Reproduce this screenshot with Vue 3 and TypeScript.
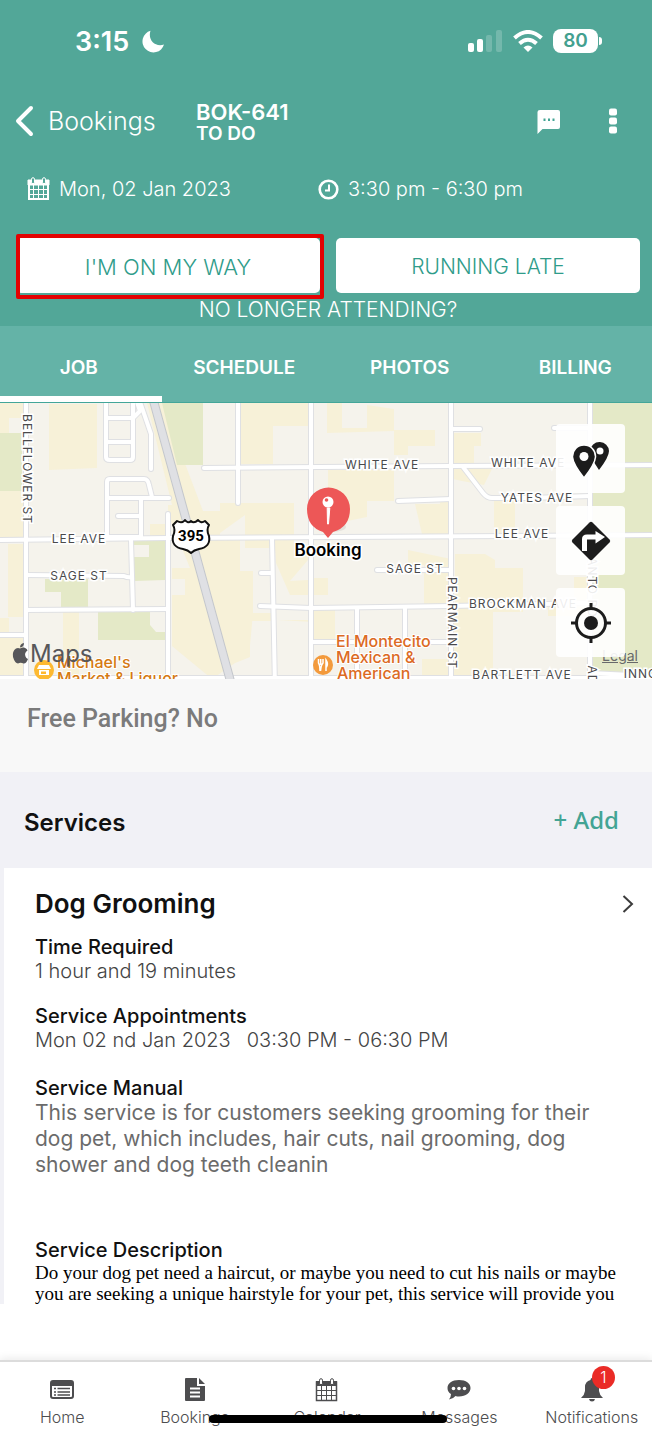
<script setup lang="ts">
import { ref } from 'vue'

interface Label {
  text: string
  x: number
  y: number
}
interface Tab {
  name: string
  icon: 'home' | 'file' | 'calendar' | 'chat' | 'bell'
  badge?: number
}

const sections = ['JOB', 'SCHEDULE', 'PHOTOS', 'BILLING']
const active = ref('JOB')

const streets: Label[] = [
  { text: 'LEE AVE', x: 79, y: 140 },
  { text: 'SAGE ST', x: 79, y: 177 },
  { text: 'WHITE AVE', x: 382, y: 66 },
  { text: 'WHITE AVE', x: 528, y: 64 },
  { text: 'YATES AVE', x: 537, y: 99 },
  { text: 'LEE AVE', x: 522, y: 135 },
  { text: 'SAGE ST', x: 415, y: 170 },
  { text: 'BROCKMAN AVE', x: 523, y: 205 },
  { text: 'BARTLETT AVE', x: 522, y: 276 },
  { text: 'INNO', x: 641, y: 275 },
]

const roads = [
  'M26 -5V285', 'M0 137L168 135L652 132', 'M26 172L124 173Q128 175 132 174', 'M26 207L168 206', 'M0 232H26',
  'M0 275H652', 'M131 137L133 207', 'M168 111V285', 'M106 -5V54Q106 57 110 57H130Q133 57 133 54V-5',
  'M106 15H133', 'M106 39H133', 'M133 15L140 8L136 -4', 'M139 -4L151 31V66',
  'M107 134V79Q107 76 110 76H144Q148 76 149 82L152 94', 'M107 95H169', 'M141 95V134', 'M118 113H141', 'M107 134H139',
  'M204 65L450 63L652 62', 'M238 -5V100', 'M311 -5V285', 'M398 98L451 96', 'M272 135L275 285', 'M261 170H272',
  'M260 203L311 205L451 203L590 200', 'M377 167H451', 'M357 205V275', 'M405 205V275', 'M311 239H451', 'M451 -5V285',
  'M451 26H480', 'M554 25H590', 'M463 64L483 90Q487 95 492 95H530L590 93', 'M590 -5V285', 'M590 270L652 273',
]

const tabs: Tab[] = [
  { name: 'Home', icon: 'home' },
  { name: 'Bookings', icon: 'file' },
  { name: 'Calendar', icon: 'calendar' },
  { name: 'Messages', icon: 'chat' },
  { name: 'Notifications', icon: 'bell', badge: 1 },
]
</script>

<template>
  <div class="app">
    <header class="header">
      <div class="status">
        <div class="clock">
          <span>3:15</span>
          <svg width="23" height="23" viewBox="0 0 23 23"><path d="M8.500 .8A11 11 0 1 0 22 14.600C13 17.500 5.500 10 8.500 .8Z" fill="#fff" /></svg>
        </div>
        <div class="signals">
          <svg width="35" height="22" viewBox="0 0 35 22" fill="#fff">
            <rect x="0" y="13" width="6" height="9" rx="2" /><rect x="9" y="9" width="6" height="13" rx="2" />
            <rect x="18" y="5" width="6" height="17" rx="2" opacity=".2" /><rect x="28" y="0" width="6" height="22" rx="2" opacity=".2" />
          </svg>
          <svg width="30" height="22" viewBox="0 0 30 22" fill="none" stroke="#fff" stroke-width="4">
            <path d="M1.500 8Q15 -4 28.500 8" /><path d="M6.500 13.500Q15 6 23.500 13.500" />
            <path d="M10.500 17.500Q15 13.500 19.500 17.500L15 22Z" fill="#fff" stroke="none" />
          </svg>
          <div class="battery">80</div>
        </div>
      </div>

      <div class="titlebar">
        <a class="back" href="#bookings">
          <svg width="20" height="32" viewBox="0 0 20 32"><path d="M17 3L4 16L17 29" fill="none" stroke="#fff" stroke-width="4" stroke-linecap="round" stroke-linejoin="round" /></svg>
          <span>Bookings</span>
        </a>
        <div class="ident">
          <h1>BOK-641</h1>
          <p>TO DO</p>
        </div>
        <button class="plain chat" aria-label="Chat">
          <svg width="24" height="25" viewBox="0 0 24 25"><path d="M3 1H21Q23 1 23 3V18Q23 20 21 20H5.500L.5 25V3Q.5 1 3 1Z" fill="#fff" /><path d="M6.500 9.500h2v2.500h-2zM11 9.500h2v2.500h-2zM15.500 9.500h2v2.500h-2z" fill="#43a494" /></svg>
        </button>
        <button class="plain" aria-label="More">
          <svg width="8" height="26" viewBox="0 0 8 26" fill="#fff"><rect y=".5" width="8" height="7" rx="2" /><rect y="9.500" width="8" height="7" rx="2" /><rect y="18.500" width="8" height="7" rx="2" /></svg>
        </button>
      </div>

      <div class="meta">
        <div class="when">
          <svg width="23" height="24" viewBox="0 0 23 24"><path d="M2 4H21V22H2Z" fill="none" stroke="#fff" stroke-width="2" /><path d="M1 3H22V8H1ZM1 12.500H22M1 17.500H22M6.500 8V23M11.500 8V23M16.500 8V23" fill="#fff" stroke="#fff" stroke-width="1" /><rect x="4.500" y=".7" width="3" height="6" rx="1.500" fill="#52a798" stroke="#fff" /><rect x="15.500" y=".7" width="3" height="6" rx="1.500" fill="#52a798" stroke="#fff" /></svg>
          <span>Mon, 02 Jan 2023</span>
        </div>
        <div class="when">
          <svg width="21" height="21" viewBox="0 0 21 21" fill="none" stroke="#fff"><circle cx="10.500" cy="10.500" r="8.800" stroke-width="2.600" /><path d="M11 5.500V11.500H7" stroke-width="2" /></svg>
          <span>3:30 pm - 6:30 pm</span>
        </div>
      </div>

      <div class="actions">
        <div class="marked"><button class="action">I'M ON MY WAY</button></div>
        <button class="action late">RUNNING LATE</button>
      </div>
      <a class="leave" href="#leave">NO LONGER ATTENDING?</a>
    </header>

    <nav class="sections">
      <div class="bleed four">
        <button v-for="s in sections" :key="s" :class="['section', { active: s === active }]" @click="active = s">{{ s }}</button>
      </div>
    </nav>

    <section class="map" aria-label="Map">
      <svg class="canvas" viewBox="0 0 652 276" preserveAspectRatio="xMidYMid slice">
        <rect width="652" height="276" fill="#f5f3ec" />
        <g fill="#f7f1d8">
          <path d="M49 1H97V65L49 67ZM0 0H26V15H9V30H0ZM0 88H24V137H0ZM8 141H24V214H8ZM0 215H9V232H24V276H0ZM63 209H79V275H63Z" />
          <path d="M147 0H162L203 108H220V132H240V168H253V210L250 242V254L235 260L212 276L172 243V192H185V176H172V165H190L168 111V102H172ZM150 121H166V137H150Z" />
          <path d="M240 0H308V23H273V61H240ZM220 100H294V145H245V112L220 130ZM275 145H308V157L290 178L308 177V192H290L276 160ZM278 217H308V205H335V237H313V219ZM249 210H275V218H249Z" />
          <path d="M327 0H342V25H367V2L394 6V27H435V43H408V52H394V28L327 30ZM328 67H394V98H367V114L328 122ZM415 101H451V131H422ZM408 147L451 156V205H424V162H408ZM313 175H328V192H313ZM447 205H451V237H447ZM422 256H451V275H422Z" />
          <path d="M453 30H481V43H474V60H495L484 82L462 78L453 76ZM440 97H449V133H440ZM494 98H515V130H494ZM455 151H485L495 157V165H523V209H493V274H453V205H455ZM574 174H588V213H548V200H574Z" />
        </g>
        <g fill="#e4e9c7">
          <path d="M0 30H22V88H0ZM162 0H203V62H177ZM134 138H165V177L134 178V154H149V142H134ZM45 176H88V204H61V189H45ZM98 209H150V222L156 229H165V237H98ZM592 0H652V276H592Z" />
        </g>
        <g fill="none" stroke-linecap="round" stroke-linejoin="round">
          <g stroke="#dfe0e3" stroke-width="6"><path v-for="r in roads" :key="r" :d="r" /></g>
          <g stroke="#fff" stroke-width="4"><path v-for="r in roads" :key="r" :d="r" /></g>
          <path d="M153 -4L231 280" stroke="#c4c7cc" stroke-width="9" />
          <path d="M153 -4L231 280" stroke="#dfe0e4" stroke-width="7" />
        </g>
        <g class="street">
          <text v-for="(s, i) in streets" :key="i" :x="s.x" :y="s.y">{{ s.text }}</text>
          <text transform="translate(23 66) rotate(90)">BELLFLOWER ST</text>
          <text transform="translate(448 220) rotate(90)">PEARMAIN ST</text>
          <text transform="translate(588 167) rotate(90)">ADELANTO RD</text>
          <text transform="translate(588 272) rotate(90)">AD</text>
        </g>
        <path d="M177 118Q182 121 185 117Q188 121 191 118Q194 121 198 117Q201 121 205 118L209 122Q206 127 209 133Q211 144 199 146Q194 147 191 150Q188 147 183 146Q171 144 173 133Q176 127 173 122Z" fill="#fff" stroke="#111" stroke-width="2" stroke-linejoin="round" />
        <text class="shield" x="191" y="138">395</text>

        <circle cx="44" cy="267" r="10" fill="#fdb931" />
        <path d="M39 262H49L51 266H37ZM39 267H49V272H39Z" fill="#fff" /><path d="M41 268.500H46V271H41Z" fill="#fdb931" />
        <g class="poi market"><text x="57" y="265">Michael's</text><text x="57" y="281">Market &amp; Liquor</text></g>
        <g fill="#57575a">
          <path d="M20 245.500Q23.500 243.500 26 245.500Q27 246 27.500 247.500Q24 250 25.500 253.500Q26 255 28 256Q26 261 23.500 260.500Q20.500 259 18 260.500Q15 260.500 13 254Q12 248 16 245.500Q18 244.500 20 245.500ZM20 244.500Q20 240.500 24 240Q24 244 20 244.500Z" />
          <text class="brand" x="30" y="259">Maps</text>
        </g>

        <circle cx="323" cy="262" r="10" fill="#f39a3c" />
        <path d="M318.500 256V260Q320 262 320 268M323 256V260Q321 262 320.500 268M320.700 256V262M326 268V257Q328.500 261 326.500 264" fill="none" stroke="#fff" stroke-width="1.500" />
        <g class="poi diner"><text x="336" y="244">El Montecito</text><text x="336" y="260">Mexican &amp;</text><text x="337" y="276">American</text></g>

        <ellipse cx="332" cy="124" rx="14" ry="5" fill="#000" opacity=".07" />
        <path d="M328 135L323 129Q307 124 307 106A21 21 0 0 1 350 106Q350 124 333 129Z" fill="#ed5757" />
        <path d="M327.200 105H329.800L328.500 121H327.500Z" fill="#fff" stroke="#fff" stroke-linejoin="round" /><circle cx="328" cy="99" r="5.500" fill="#fff" /><circle cx="326.500" cy="97" r="1.800" fill="#ed5757" />
        <text class="place" x="328" y="153">Booking</text>
      </svg>
      <a class="legal" href="#legal">Legal</a>
      <div class="tools">
        <button class="tool" aria-label="Show pins">
          <svg width="38" height="38" viewBox="0 0 38 38"><path d="M28 2A9.500 9.500 0 0 0 18 11Q18 17 27 30Q37 17 37 11A9.500 9.500 0 0 0 28 2Z" fill="#1c1c1c" /><circle cx="28" cy="11" r="3.500" fill="#fff" /><path d="M12 5A11.500 11.500 0 0 0 .5 17Q1 24 12 38Q23 24 23.500 17A11.500 11.500 0 0 0 12 5Z" fill="#1c1c1c" stroke="#fff" stroke-width="1.500" /><circle cx="12" cy="16.500" r="4.500" fill="#fff" /></svg>
        </button>
        <button class="tool" aria-label="Directions">
          <svg width="40" height="40" viewBox="0 0 40 40"><path d="M18.500 1.500Q20 0 21.500 1.500L38.500 18.500Q40 20 38.500 21.500L21.500 38.500Q20 40 18.500 38.500L1.500 21.500Q0 20 1.500 18.500Z" fill="#1c1c1c" /><path d="M11 30V18Q11 13.500 16 13.500H24.500V10L34 16L24.500 22.500V18.500H16V30Z" fill="#fff" /></svg>
        </button>
        <button class="tool" aria-label="My location">
          <svg width="40" height="40" viewBox="0 0 40 40" fill="none" stroke="#1c1c1c" stroke-width="3"><circle cx="20" cy="20" r="14.500" /><circle cx="20" cy="20" r="7" fill="#1c1c1c" stroke="none" /><path d="M20 0V6M20 34V40M0 20H6M34 20H40" /></svg>
        </button>
      </div>
    </section>

    <p class="parking">Free Parking? No</p>

    <div class="bar">
      <h2>Services</h2>
      <button class="add">+ Add</button>
    </div>

    <main class="card">
      <div class="name">
        <h3>Dog Grooming</h3>
        <button class="plain" aria-label="Open service">
          <svg width="12" height="20" viewBox="0 0 12 20"><path d="M1.500 2L10 10L1.500 18" fill="none" stroke="#3c3c3c" stroke-width="2" /></svg>
        </button>
      </div>
      <section class="item">
        <h4>Time Required</h4>
        <p>1 hour and 19 minutes</p>
      </section>
      <section class="item">
        <h4>Service Appointments</h4>
        <p class="slot"><span>Mon 02 nd Jan 2023</span><span>03:30 PM - 06:30 PM</span></p>
      </section>
      <section class="item">
        <h4>Service Manual</h4>
        <p class="manual">This service is for customers seeking grooming for their dog pet, which includes, hair cuts, nail grooming, dog shower and dog teeth cleanin</p>
      </section>
      <section class="item last">
        <h4>Service Description</h4>
        <p class="story">Do your dog pet need a haircut, or maybe you need to cut his nails or maybe you are seeking a unique hairstyle for your pet, this service will provide you</p>
      </section>
    </main>

    <footer class="footer">
      <nav class="bleed five">
        <a v-for="t in tabs" :key="t.name" class="tab" href="#">
          <span class="glyph">
            <svg v-if="t.icon === 'home'" width="24" height="20" viewBox="0 0 24 20"><rect x="1" y="1" width="22" height="17" rx="2" fill="#fff" stroke="#4d4d4f" stroke-width="2" /><path d="M1 1H23V6H1Z" fill="#4d4d4f" /><path d="M4 8.500H6M7.500 8.500H20M4 12H6M7.500 12H20M4 15H6M7.500 15H20" stroke="#4d4d4f" stroke-width="1.500" /></svg>
            <svg v-else-if="t.icon === 'file'" width="20" height="24" viewBox="0 0 20 24"><path d="M0 1Q0 0 1 0H12V8H20V22Q20 23 19 23H1Q0 23 0 22ZM14 0L20 6H14Z" fill="#4d4d4f" /><path d="M5 10.500H15M5 14.500H15M5 18.500H15" stroke="#fff" stroke-width="1.800" /></svg>
            <svg v-else-if="t.icon === 'calendar'" width="23" height="24" viewBox="0 0 23 24"><path d="M1.500 4H21.500V22.500H1.500Z" fill="none" stroke="#4d4d4f" stroke-width="1.500" /><path d="M1 3H22V8H1Z" fill="#4d4d4f" /><path d="M1 12.500H22M1 17.500H22M6.500 8V23M11.500 8V23M16.500 8V23" stroke="#4d4d4f" stroke-width="1" /><rect x="4.500" y=".7" width="3" height="6" rx="1.500" fill="#fff" stroke="#4d4d4f" /><rect x="15.500" y=".7" width="3" height="6" rx="1.500" fill="#fff" stroke="#4d4d4f" /></svg>
            <svg v-else-if="t.icon === 'chat'" width="24" height="20" viewBox="0 0 24 20"><path d="M12 0C19 0 23.500 3.500 23.500 8S19 16.500 12 16.500Q10 16.500 8.500 16Q6 19 2 19.500Q4 17 4 14Q.5 12 .5 8C.5 3.500 5 0 12 0Z" fill="#4d4d4f" /><circle cx="6.500" cy="8.500" r="1.800" fill="#fff" /><circle cx="12" cy="8.500" r="1.800" fill="#fff" /><circle cx="17.500" cy="8.500" r="1.800" fill="#fff" /></svg>
            <svg v-else width="22" height="24" viewBox="0 0 22 24"><path d="M11 0Q12.500 0 12.500 2Q18 3.500 18 9V13Q18.500 17 22 20H0Q3.500 17 4 13V9Q4 3.500 9.500 2Q9.500 0 11 0ZM8 21H14Q13.500 23.500 11 23.500T8 21Z" fill="#4d4d4f" /></svg>
            <span v-if="t.badge" class="badge">{{ t.badge }}</span>
          </span>
          <span>{{ t.name }}</span>
        </a>
      </nav>
      <div class="indicator"></div>
    </footer>
  </div>
</template>

<style>
body {
  margin: 0;
  background: #fff;
}
</style>

<style scoped>
* {
  box-sizing: border-box;
}
.app {
  display: flex;
  flex-direction: column;
  min-height: 100vh;
  overflow: hidden;
  font-family: Inter, "Liberation Sans", sans-serif;
  color: #111;
}
h1, h2, h3, h4, p {
  margin: 0;
}
svg {
  display: block;
  flex: none;
}
button {
  margin: 0;
  border: 0;
  padding: 0;
  font: inherit;
  color: inherit;
  cursor: pointer;
}
a {
  color: inherit;
  text-decoration: none;
}
.plain {
  background: none;
}
.header {
  background: #52a798;
  color: #fff;
}
.status {
  display: flex;
  align-items: center;
  justify-content: space-between;
  height: 82px;
  padding: 0 54px 0 75px;
}
.clock, .signals {
  display: flex;
  align-items: center;
  gap: 10px;
}
.clock {
  gap: 13px;
  font-size: 27px;
  font-weight: 600;
}
.battery {
  position: relative;
  width: 45px;
  border-radius: 8px;
  background: #fff;
  color: #43a08f;
  font-size: 19px;
  font-weight: 600;
  line-height: 24px;
  text-align: center;
}
.battery::after {
  content: "";
  position: absolute;
  top: 8px;
  right: -4px;
  width: 3px;
  height: 8px;
  border-radius: 0 4px 4px 0;
  background: #fff;
}
.titlebar {
  display: flex;
  align-items: center;
  height: 78px;
  padding: 0 35px 0 14px;
}
.back {
  display: flex;
  align-items: center;
  gap: 14px;
  width: 182px;
  font-size: 25px;
  font-weight: 300;
}
.ident {
  flex: 1;
}
.ident h1 {
  font-size: 22px;
  font-weight: 600;
  line-height: 20px;
}
.ident p {
  height: 18px;
  overflow: hidden;
  font-size: 19px;
  font-weight: 600;
  line-height: 24px;
}
.chat {
  margin-right: 48px;
}
.meta {
  display: grid;
  grid-template-columns: 291px 1fr;
  padding: 16px 27px 0;
  height: 78px;
  font-size: 20px;
  font-weight: 300;
  line-height: 26px;
}
.when {
  display: flex;
  align-items: center;
  align-self: start;
  gap: 9px;
}
.actions {
  display: grid;
  grid-template-columns: 1fr 1fr;
  gap: 16px;
  padding: 0 12px 0 16px;
}
.action {
  width: 100%;
  height: 55px;
  padding-top: 2px;
  border-radius: 5px;
  background: #fff;
  color: #2f9c8a;
  font-size: 22px;
  font-weight: 300;
}
.late {
  font-size: 21px;
}
.marked {
  position: relative;
}
.marked::after {
  content: "";
  position: absolute;
  inset: -4px -4px -6px 0;
  border: 4px solid #e30202;
  border-radius: 2px;
  pointer-events: none;
}
.leave {
  display: block;
  padding-left: 4px;
  font-size: 21px;
  font-weight: 300;
  line-height: 33px;
  text-align: center;
}
.sections {
  border-bottom: 1px solid #43a699;
  background: #64b3a7;
  color: #fff;
}
.bleed {
  display: grid;
  margin: 0 -6px 0 -4px;
}
.four {
  grid-template-columns: repeat(4, 1fr);
}
.five {
  grid-template-columns: repeat(5, 1fr);
}
.section {
  height: 76px;
  padding-top: 12px;
  border-bottom: 6px solid transparent;
  background: none;
  font-size: 19px;
  font-weight: 600;
}
.section.active {
  border-bottom-color: #fff;
}
.map {
  position: relative;
  height: 276px;
}
.canvas {
  width: 100%;
  height: 100%;
}
.street text {
  font-size: 12px;
  letter-spacing: 1px;
  text-anchor: middle;
  fill: #4a4a4c;
  stroke: #fff;
  stroke-width: 3px;
  paint-order: stroke;
}
.shield {
  font: 700 15px Roboto, sans-serif;
  text-anchor: middle;
}
.poi text {
  font-size: 16px;
  font-weight: 500;
  stroke: #fff;
  stroke-width: 2px;
  paint-order: stroke;
}
.market {
  fill: #d57a12;
}
.diner {
  fill: #dc6a24;
}
.brand {
  font-size: 24px;
}
.place {
  font-size: 17px;
  font-weight: 600;
  text-anchor: middle;
  stroke: #fff;
  stroke-width: 3px;
  paint-order: stroke;
}
.legal {
  position: absolute;
  right: 14px;
  bottom: 14px;
  color: #68696a;
  font-size: 14px;
  line-height: 18px;
  text-decoration: underline;
}
.tools {
  position: absolute;
  top: 21px;
  right: 27px;
  display: grid;
  gap: 13px;
}
.tool {
  display: grid;
  place-items: center;
  width: 69px;
  height: 69px;
  border-radius: 4px;
  background: rgba(255, 255, 255, 0.9);
}
.parking {
  padding: 24px 27px 37px;
  background: #f8f8f8;
  color: #7b7b7b;
  font: 500 25px/32px Roboto, sans-serif;
}
.bar {
  display: flex;
  align-items: center;
  justify-content: space-between;
  height: 96px;
  padding: 4px 33px 0 24px;
  background: #f1f1f6;
}
.bar h2 {
  font-size: 24px;
  font-weight: 600;
}
.add {
  padding-bottom: 4px;
  background: none;
  color: #43a494;
  font: 500 24px/32px "Noto Sans", sans-serif;
}
.card {
  border-left: 4px solid #f1f1f6;
  padding: 18px 18px 0 31px;
}
.name {
  display: flex;
  align-items: center;
  justify-content: space-between;
  margin-bottom: 13px;
  line-height: 36px;
}
.name h3 {
  font-size: 26px;
  font-weight: 600;
}
.item {
  margin-bottom: 21px;
  color: #444;
  font-size: 20px;
  font-weight: 300;
  line-height: 24px;
}
.item h4 {
  color: #111;
  font-size: 20px;
  font-weight: 500;
}
.slot {
  display: flex;
  gap: 16px;
  margin-bottom: 24px;
}
.manual {
  margin-bottom: 60px;
  padding-right: 20px;
  color: #6b6b6b;
  font-size: 21px;
  font-weight: 400;
  line-height: 26px;
}
.last {
  margin-bottom: 0;
}
.story {
  padding-right: 8px;
  color: #000;
  font: 400 19px/21px "Liberation Serif", serif;
}
.footer {
  position: relative;
  margin-top: auto;
  border-top: 2px solid #dcdcdc;
  box-shadow: 0 -2px 8px rgba(0, 0, 0, 0.08);
  background: #fff;
}
.tab {
  display: flex;
  flex-direction: column;
  align-items: center;
  height: 68px;
  padding-top: 12px;
  color: #4d4d4f;
  font-size: 16px;
  font-weight: 300;
  line-height: 22px;
}
.glyph {
  position: relative;
  display: grid;
  place-items: center;
  height: 32px;
}
.badge {
  position: absolute;
  top: -8px;
  left: 11px;
  width: 23px;
  border-radius: 50%;
  background: #ea2b26;
  color: #fff;
  font-size: 16px;
  line-height: 23px;
  text-align: center;
}
.indicator {
  position: absolute;
  bottom: 7px;
  left: 50%;
  width: 238px;
  height: 8px;
  margin-left: -117px;
  border-radius: 4px;
  background: #000;
}
</style>
